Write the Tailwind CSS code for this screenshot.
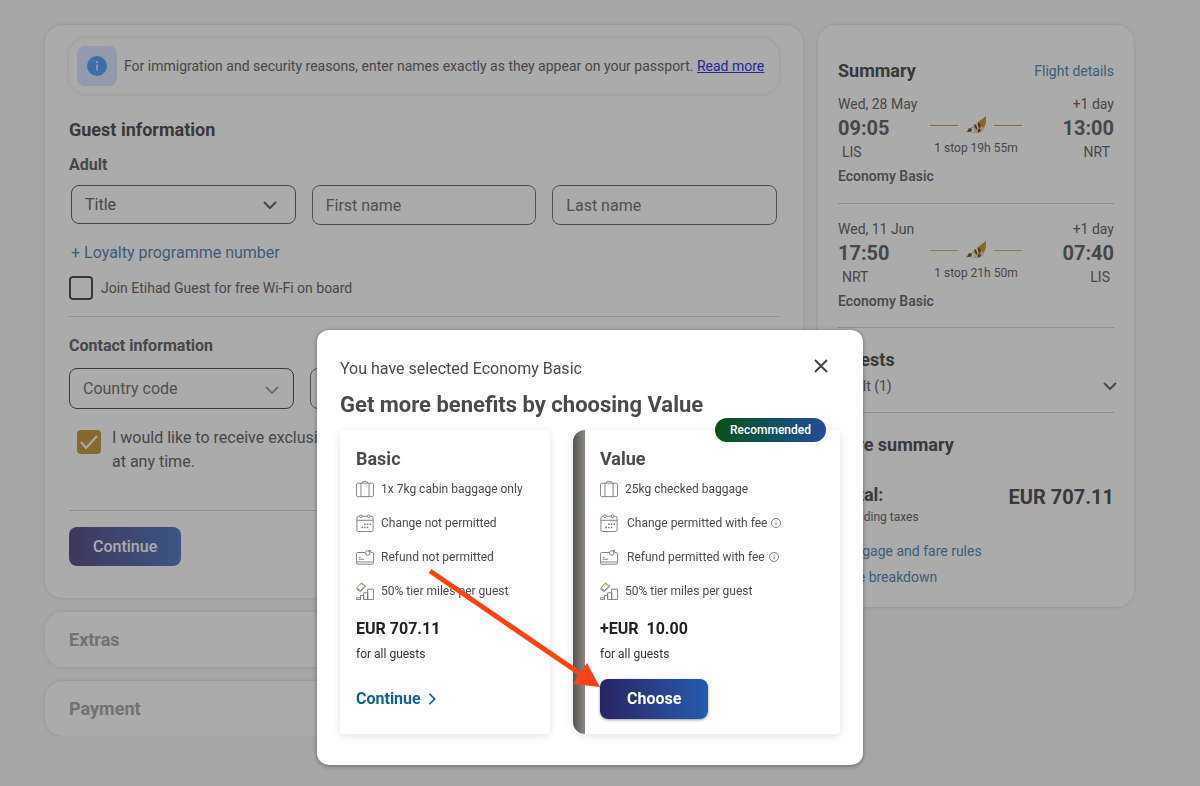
<!DOCTYPE html>
<html lang="en">
<head>
    <meta charset="UTF-8">
    <meta name="viewport" content="width=device-width, initial-scale=1.0">
    <title>Guest information</title>
    <script src="https://cdn.jsdelivr.net/npm/@tailwindcss/browser@4"></script>
</head>
<body class="bg-[#f8f8f8] font-['Roboto','Liberation_Sans',sans-serif] text-[#6c6a6a]">
    <!-- Shared icons -->
    <svg class="hidden">
        <symbol id="chevron" viewBox="0 0 16 16"><path d="M2 5l6 6 6-6" fill="none" stroke="currentColor" stroke-width="2"/></symbol>
        <symbol id="chevron-thin" viewBox="0 0 16 16"><path d="M2 5l6 6 6-6" fill="none" stroke="currentColor" stroke-width="1.5"/></symbol>
        <symbol id="info" viewBox="0 0 12 12"><circle cx="6" cy="6" r="4.5" fill="none" stroke="currentColor" stroke-width=".8"/><path d="M6 5.3v3M6 3.5v.9" stroke="currentColor" stroke-width=".9"/></symbol>
        <symbol id="bag" viewBox="0 0 20 20"><g fill="none" stroke="currentColor"><rect x=".5" y="3.500" width="19" height="15" rx="2"/><path d="M5.500 3.500v15M14.500 3.500v15M7 3.500q0-2 1.500-2h3q1.500 0 1.500 2"/></g></symbol>
        <symbol id="calendar" viewBox="0 0 20 20"><g fill="none" stroke="currentColor"><rect x="1" y="2.500" width="18" height="17" rx="2"/><path d="M1 7h18"/><circle cx="5.500" cy="2.500" r="1.500" fill="#fff"/><circle cx="14" cy="2.500" r="1.500" fill="#fff"/></g><path d="M9 11.500h1.700M12 11.500h1.700M15 11.500h1.700M6 15h1.700M9 15h1.700M12 15h1.700" stroke="currentColor" stroke-width="1.700"/></symbol>
        <symbol id="refund" viewBox="0 0 20 20"><g fill="none" stroke="currentColor"><path d="M10 5H2Q.5 5 .5 6.500v10Q.5 18 2 18h16q1.500 0 1.500-1.500v-10Q19.500 5 18 5h-1.500M.5 15.500h19M3 12.500h6M3 10.500h2"/><circle cx="13" cy="5.500" r="2.500"/><path d="M14 3.300l2-1v2.500"/></g></symbol>
        <symbol id="miles" viewBox="0 0 20 20"><g fill="none" stroke="currentColor"><path d="M.5 19.500v-2h4.500v2zM5 19.500V15h3.500v4.500M8.500 19.500V12h4.500v7.500zM13 19.500V8h6.500v11.500zM1 6.500L6 1l4.500 3.500-5.500 6-3.500-1.500zM1.500 7l3.500 2.500 5.500-5"/></g><path d="M6 1.500l2.500 2" stroke="#e0a030" stroke-width="1.500"/></symbol>
        <symbol id="tail" viewBox="0 0 22 18"><path d="M0 17l5-5 6-4L21 0v6l-3 9-6 2z" fill="#e8d6b8"/><path d="M13 6l8-6v6l-2 6-4-3z" fill="#d29a3c"/><path d="M13 6l3 3-1 4-3-4zM9 8l2.500 1 1 5-2.500-2zM4 12l3 1-1 3-4 0zM13 13l2 0 1 2-3 2z" fill="#7a4d38"/><path d="M11 7.500l1.500 0 1 4-1.500-1zM0 17l5-1.500 3 1.500zM7 12l2 1 0 3-2 0z" fill="#fff"/></symbol>
    </svg>

    <!-- Booking page -->
    <main class="flex items-start gap-[15px] pt-[25px] pl-[45px] pr-[66px]">
        <div class="flex min-w-0 flex-1 flex-col gap-[14px]">
            <section class="rounded-[18px] bg-white px-6 pt-[13px] pb-8 shadow-[0_0_4px_rgba(0,0,0,0.12)]">
                <div class="flex items-center gap-[7px] rounded-[18px] p-2 shadow-[0_0_4px_rgba(0,0,0,0.12)]">
                    <div class="flex size-10 items-center justify-center rounded-lg bg-[#d8e7ff]">
                        <svg class="size-5" viewBox="0 0 20 20"><circle cx="10" cy="10" r="10" fill="#58a5ff"/><path d="M10 8.500v6M10 5v2" stroke="#d8e7ff" stroke-width="1.800"/></svg>
                    </div>
                    <p class="text-sm whitespace-nowrap">For immigration and security reasons, enter names exactly as they appear on your passport. <a href="#" class="text-[#3939e7] underline">Read more</a></p>
                </div>

                <h2 class="mt-6 text-lg leading-6 font-bold text-[#555]">Guest information</h2>
                <h3 class="mt-[11px] text-base leading-6 font-bold">Adult</h3>
                <div class="mt-2 grid grid-cols-3 gap-4 px-[2px] text-base">
                    <div class="relative">
                        <select aria-label="Title" class="h-[39px] w-full appearance-none rounded-lg border border-[#666] px-[13px]"><option>Title</option></select>
                        <svg class="pointer-events-none absolute top-3 right-[18px] size-4"><use href="#chevron"/></svg>
                    </div>
                    <input type="text" aria-label="First name" placeholder="First name" class="h-10 min-w-0 rounded-lg border border-[#777] px-[13px] placeholder:text-[#777]">
                    <input type="text" aria-label="Last name" placeholder="Last name" class="h-10 min-w-0 rounded-lg border border-[#777] px-[13px] placeholder:text-[#777]">
                </div>
                <a href="#" class="mt-4 block px-[2px] text-base leading-6 text-[#5a8bb5]">+ Loyalty programme number</a>
                <label class="mt-[11px] flex h-6 items-center gap-2 text-sm">
                    <input type="checkbox" class="size-6 appearance-none rounded border-2 border-[#555]">
                    Join Etihad Guest for free Wi-Fi on board
                </label>

                <hr class="mt-4 border-[#dcdcdc]">
                <h3 class="mt-[17px] text-base leading-6 font-bold">Contact information</h3>
                <div class="mt-[10px] grid grid-cols-3 gap-4 pr-1 text-base">
                    <div class="relative">
                        <select aria-label="Country code" class="h-[41px] w-full appearance-none rounded-lg border border-[#555] px-[13px] text-[#777]"><option>Country code</option></select>
                        <svg class="pointer-events-none absolute top-[14px] right-[14px] size-4 text-[#8c8ca8]"><use href="#chevron-thin"/></svg>
                    </div>
                    <input type="tel" aria-label="Mobile number" class="h-[41px] min-w-0 rounded-lg border border-[#777] px-[13px]">
                    <input type="email" aria-label="Email" class="h-[41px] min-w-0 rounded-lg border border-[#777] px-[13px]">
                </div>
                <label class="mt-[17px] flex gap-[11px] pl-2 text-base leading-6">
                    <span class="relative mt-1 size-6 shrink-0">
                        <input type="checkbox" checked class="block size-6 appearance-none rounded bg-[#c99d47]">
                        <svg class="pointer-events-none absolute inset-0 size-6" viewBox="0 0 24 24"><path d="M4 12l5 6L20 6" fill="none" stroke="#fff" stroke-width="2"/></svg>
                    </span>
                    <span>I would like to receive exclusive offers and news by email. I can opt out<br>at any time.</span>
                </label>

                <hr class="mt-9 border-[#d4d4d4]">
                <button type="button" class="mt-4 h-[39px] rounded-lg bg-linear-to-r from-[#5d548a] to-[#5a80c8] px-6 text-base font-medium text-white">Continue</button>
            </section>

            <section class="rounded-[18px] bg-white px-6 py-[15px] shadow-[0_0_4px_rgba(0,0,0,0.12)]">
                <h2 class="text-lg leading-[25px] font-bold text-[#aaa]">Extras</h2>
            </section>
            <section class="rounded-[18px] bg-white px-6 py-[15px] shadow-[0_0_4px_rgba(0,0,0,0.12)]">
                <h2 class="text-lg leading-[25px] font-bold text-[#aaa]">Payment</h2>
            </section>
        </div>

        <aside class="w-[316px] shrink-0 rounded-[18px] bg-white px-5 pt-[34px] pb-5 text-sm shadow-[0_0_4px_rgba(0,0,0,0.12)]">
            <div class="flex items-center justify-between leading-6">
                <h2 class="text-lg leading-6 font-bold text-[#555]">Summary</h2>
                <a href="#" class="text-[#5a8bb5]">Flight details</a>
            </div>

            <div class="mt-[11px] grid grid-cols-[1fr_auto_1fr] leading-5">
                <div>
                    <p>Wed, 28 May</p>
                    <p class="text-xl leading-7 font-bold">09:05</p>
                    <p class="px-1">LIS</p>
                </div>
                <div class="pt-[22px] text-center text-xs">
                    <div class="flex items-center justify-center gap-[7px]">
                        <span class="w-7 border-t border-[#d2a03c]"></span>
                        <svg class="h-[18px] w-[22px]"><use href="#tail"/></svg>
                        <span class="w-7 border-t border-[#d2a03c]"></span>
                    </div>
                    <p class="mt-1 leading-5">1 stop 19h 55m</p>
                </div>
                <div class="text-right">
                    <p>+1 day</p>
                    <p class="text-xl leading-7 font-bold">13:00</p>
                    <p class="px-1">NRT</p>
                </div>
            </div>
            <p class="mt-1 leading-5 font-medium">Economy Basic</p>
            <hr class="mt-[17px] border-[#d4d4d4]">

            <div class="mt-[15px] grid grid-cols-[1fr_auto_1fr] leading-5">
                <div>
                    <p>Wed, 11 Jun</p>
                    <p class="text-xl leading-7 font-bold">17:50</p>
                    <p class="px-1">NRT</p>
                </div>
                <div class="pt-[22px] text-center text-xs">
                    <div class="flex items-center justify-center gap-[7px]">
                        <span class="w-7 border-t border-[#dcb875]"></span>
                        <svg class="h-[18px] w-[22px]"><use href="#tail"/></svg>
                        <span class="w-7 border-t border-[#dcb875]"></span>
                    </div>
                    <p class="mt-1 leading-5">1 stop 21h 50m</p>
                </div>
                <div class="text-right">
                    <p>+1 day</p>
                    <p class="text-xl leading-7 font-bold">07:40</p>
                    <p class="px-1">LIS</p>
                </div>
            </div>
            <p class="mt-1 leading-5 font-medium">Economy Basic</p>
            <hr class="mt-4 border-[#d4d4d4]">

            <h2 class="mt-5 text-lg leading-6 font-bold text-[#555]">Guests</h2>
            <div class="mt-1 flex items-center justify-between leading-5">
                <p>Adult (1)</p>
                <svg class="-mr-1 size-4"><use href="#chevron"/></svg>
            </div>
            <hr class="mt-4 border-[#d4d4d4]">

            <h2 class="mt-5 text-lg leading-6 font-bold text-[#555]">Fare summary</h2>
            <div class="mt-[26px] flex items-end justify-between font-bold text-[#555]">
                <p class="text-lg leading-6">Total:</p>
                <p class="text-xl leading-5">EUR 707.11</p>
            </div>
            <p class="text-xs leading-5">Including taxes</p>
            <a href="#" class="mt-[14px] block leading-5 text-[#5a8bb5]">Baggage and fare rules</a>
            <a href="#" class="mt-[6px] block leading-5 text-[#5a8bb5]">Fare breakdown</a>
        </aside>
    </main>

    <!-- Upsell modal -->
    <div class="fixed inset-0 flex items-end justify-center bg-black/33 pr-5 pb-[21px]">
        <div role="dialog" aria-labelledby="upsell-title" class="relative w-[546px] rounded-xl bg-white px-[23px] pt-[27px] pb-[31px] text-[#4d4b48] shadow-[0_1px_5px_rgba(0,0,0,0.4)]">
            <div class="flex items-start justify-between">
                <p class="text-base leading-6">You have selected Economy Basic</p>
                <button type="button" aria-label="Close" class="mr-3 pt-[2px]">
                    <svg class="size-[14px]" viewBox="0 0 14 14"><path d="M1 1l12 12M13 1L1 13" stroke="#444" stroke-width="2"/></svg>
                </button>
            </div>
            <h2 id="upsell-title" class="mt-[10px] text-[22px] leading-7 font-bold">Get more benefits by choosing Value</h2>

            <div class="mt-[11px] flex gap-[23px] text-xs">
                <div class="w-[210px] rounded bg-white px-4 pt-[17px] pb-[15px] shadow-[0_2px_8px_rgba(0,0,0,0.12)]">
                    <h3 class="text-lg leading-6 font-bold">Basic</h3>
                    <ul class="mt-[6px] flex flex-col gap-[10px] leading-6 whitespace-nowrap">
                        <li class="flex items-center gap-[7px]"><svg class="size-[18px] text-[#777]"><use href="#bag"/></svg>1x 7kg cabin baggage only</li>
                        <li class="flex items-center gap-[7px]"><svg class="size-[18px] text-[#777]"><use href="#calendar"/></svg>Change not permitted</li>
                        <li class="flex items-center gap-[7px]"><svg class="size-[18px] text-[#777]"><use href="#refund"/></svg>Refund not permitted</li>
                        <li class="flex items-center gap-[7px]"><svg class="size-[18px] text-[#777]"><use href="#miles"/></svg>50% tier miles per guest</li>
                    </ul>
                    <p class="mt-[14px] text-base leading-6 font-bold text-[#222]">EUR 707.11</p>
                    <p class="mt-[3px] leading-5 text-[#333]">for all guests</p>
                    <a href="#" class="mt-[15px] flex h-10 items-center gap-1 text-base font-bold text-[#0f6396]">Continue
                        <svg class="size-[14px] -rotate-90"><use href="#chevron"/></svg>
                    </a>
                </div>

                <div class="relative flex flex-1 rounded rounded-l-xl bg-white shadow-[0_2px_8px_rgba(0,0,0,0.12)]">
                    <div class="w-3 rounded-l-xl bg-linear-to-r from-[#57534f] to-[#8a8987]"></div>
                    <span class="absolute -top-3 right-[14px] rounded-full bg-linear-to-r from-[#0d4f0c] to-[#264a99] px-[15px] text-xs leading-6 font-medium text-white">Recommended</span>
                    <div class="px-[15px] pt-[17px] pb-[15px]">
                        <h3 class="text-lg leading-6 font-bold">Value</h3>
                        <ul class="mt-[6px] flex flex-col gap-[10px] leading-6 whitespace-nowrap">
                            <li class="flex items-center gap-[7px]"><svg class="size-[18px] text-[#777]"><use href="#bag"/></svg>25kg checked baggage</li>
                            <li class="flex items-center gap-[7px]"><svg class="size-[18px] text-[#777]"><use href="#calendar"/></svg><span class="pl-[2px]">Change permitted with fee</span><svg class="-ml-1 size-3 text-[#666]"><use href="#info"/></svg></li>
                            <li class="flex items-center gap-[7px]"><svg class="size-[18px] text-[#777]"><use href="#refund"/></svg><span class="pl-[2px]">Refund permitted with fee</span><svg class="-ml-1 size-3 text-[#666]"><use href="#info"/></svg></li>
                            <li class="flex items-center gap-[7px]"><svg class="size-[18px] text-[#777]"><use href="#miles"/></svg>50% tier miles per guest</li>
                        </ul>
                        <p class="mt-[14px] text-base leading-6 font-bold whitespace-pre text-[#222]">+EUR  10.00</p>
                        <p class="mt-[3px] leading-5 text-[#333]">for all guests</p>
                        <button type="button" class="mt-[15px] h-10 rounded-lg bg-linear-to-r from-[#282463] to-[#245bb0] px-[27px] text-base font-bold text-white shadow-[0_1px_3px_rgba(0,0,0,0.4)]">Choose</button>
                    </div>
                </div>
            </div>

            <!-- Arrow pointing at the Choose button -->
            <svg class="pointer-events-none absolute top-[238px] left-[110px] h-[122px] w-[176px]" viewBox="0 0 176 122">
                <path d="M3 3L155 107" stroke="#ff4318" stroke-width="5"/>
                <path d="M173 119L160 95L146 116z" fill="#ff4318"/>
            </svg>
        </div>
    </div>
</body>
</html>
